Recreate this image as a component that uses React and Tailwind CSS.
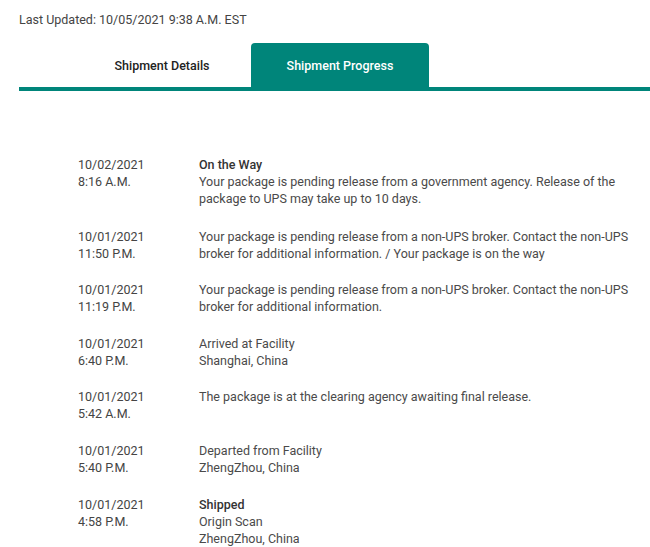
const events = [
  { date: "10/02/2021", time: "8:16 A.M.", title: "On the Way", lines: ["Your package is pending release from a government agency. Release of the package to UPS may take up to 10 days."] },
  { date: "10/01/2021", time: "11:50 P.M.", lines: ["Your package is pending release from a non-UPS broker. Contact the non-UPS broker for additional information. / Your package is on the way"] },
  { date: "10/01/2021", time: "11:19 P.M.", lines: ["Your package is pending release from a non-UPS broker. Contact the non-UPS broker for additional information."] },
  { date: "10/01/2021", time: "6:40 P.M.", lines: ["Arrived at Facility", "Shanghai, China"] },
  { date: "10/01/2021", time: "5:42 A.M.", lines: ["The package is at the clearing agency awaiting final release."] },
  { date: "10/01/2021", time: "5:40 P.M.", lines: ["Departed from Facility", "ZhengZhou, China"] },
  { date: "10/01/2021", time: "4:58 P.M.", title: "Shipped", lines: ["Origin Scan", "ZhengZhou, China"] },
];

function App() {
  return (
    <div className="w-[650px] h-[547px] overflow-hidden bg-white text-[12.5px] leading-[17px] text-[#4a4a4a]" style={{ fontFamily: "Roboto, 'Liberation Sans', sans-serif" }}>
      <div className="pl-[19px] pt-[11px]">
        <p className="text-[#444]">Last Updated: 10/05/2021 9:38 A.M. EST</p>

        <div className="mt-[15px] flex pl-[54px]">
          <button className="w-[178px] h-[44px] font-medium text-[#222]">Shipment Details</button>
          <button className="w-[178px] h-[44px] font-medium text-white bg-[#00857a] rounded-t-[4px]">Shipment Progress</button>
        </div>
        <div className="h-[4px] bg-[#00857a]"></div>
      </div>

      <div className="pl-[78px] pt-[65px] flex flex-col gap-[19.6px]">
        {events.map((ev, i) => (
          <div key={i} className={i === 0 ? "flex mb-[1px]" : "flex"}>
            <div className="w-[121px] shrink-0 text-[#444]">
              <div>{ev.date}</div>
              <div>{ev.time}</div>
            </div>
            <div className="w-[445px]">
              {ev.title && <div className="font-medium text-[#333]">{ev.title}</div>}
              {ev.lines.map((l, j) => (
                <div key={j}>{l}</div>
              ))}
            </div>
          </div>
        ))}
      </div>
    </div>
  );
}

export default App;
